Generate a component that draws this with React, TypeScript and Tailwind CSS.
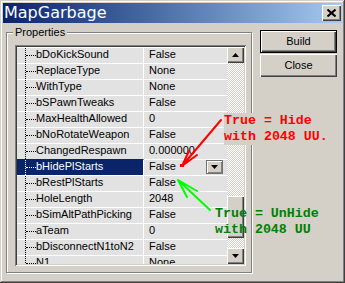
import React from 'react';

const rows: [string, string][] = [
  ['bDoKickSound', 'False'],
  ['ReplaceType', 'None'],
  ['WithType', 'None'],
  ['bSPawnTweaks', 'False'],
  ['MaxHealthAllowed', '0'],
  ['bNoRotateWeapon', 'False'],
  ['ChangedRespawn', '0.000000'],
  ['bHidePlStarts', 'False'],
  ['bRestPlStarts', 'False'],
  ['HoleLength', '2048'],
  ['bSimAltPathPicking', 'False'],
  ['aTeam', '0'],
  ['bDisconnectN1toN2', 'False'],
  ['N1', 'None'],
];

const SELECTED = 'bHidePlStarts';

function Triangle({ up }: { up?: boolean }) {
  return (
    <svg width="7" height="4" viewBox="0 0 7 4" className="block">
      {up ? <path d="M3.5 0 L7 4 L0 4 Z" fill="#000" /> : <path d="M0 0 L7 0 L3.5 4 Z" fill="#000" />}
    </svg>
  );
}

function ScrollButton({ up }: { up?: boolean }) {
  return (
    <div className="flex h-[16px] items-center justify-center bg-[#d4d0c8] shadow-[inset_1px_1px_#ffffff,inset_-1px_-1px_#404040,inset_-2px_-2px_#808080]">
      <Triangle up={up} />
    </div>
  );
}

function PropRow({ name, value }: { name: string; value: string }) {
  const sel = name === SELECTED;
  const dots = sel ? 'border-white' : 'border-black';
  return (
    <div className="flex h-[16px] shrink-0 bg-[#e2e2e2]">
      <div
        className={`flex w-[127px] shrink-0 border-t border-r border-r-white ${
          sel ? 'border-t-[#0a246a] bg-[#0a246a] text-white' : 'border-t-white text-black'
        }`}
      >
        <div className="w-[8px] shrink-0" />
        <div className={`w-px shrink-0 border-l border-dotted ${dots}`} />
        <div className="flex w-[10px] shrink-0 items-center">
          <div className={`w-full border-t border-dotted ${dots}`} />
        </div>
        <span className="whitespace-nowrap leading-[13px]">{name}</span>
      </div>
      <div className="flex flex-1 justify-between border-t border-white pl-[5px]">
        <span className="leading-[13px]">{value}</span>
        {sel && (
          <div className="mr-[4px] flex h-[14px] w-[17px] items-center justify-center border border-[#707070] bg-[#d4d0c8] shadow-[inset_1px_1px_#ffffff,inset_-1px_-1px_#808080]">
            <Triangle />
          </div>
        )}
      </div>
    </div>
  );
}

export default function App() {
  return (
    <div className="relative h-[283px] w-[345px] overflow-hidden bg-[#d4d0c8] p-[3px] font-['Liberation_Sans',Arial,sans-serif] text-[11px] text-black shadow-[inset_-1px_-1px_#404040,inset_1px_1px_#d4d0c8,inset_-2px_-2px_#808080,inset_2px_2px_#ffffff]">
      {/* title bar */}
      <div className="flex h-[20px] items-center justify-between bg-linear-to-r from-[#0a246a] to-[#a6caf0] pl-px pr-px">
        <span className="font-['DejaVu_Sans',sans-serif] text-[16px] leading-[20px] text-white">MapGarbage</span>
        <div className="flex h-[16px] w-[19px] items-center justify-center bg-[#d4d0c8] shadow-[inset_1px_1px_#ffffff,inset_-1px_-1px_#404040,inset_-2px_-2px_#808080]">
          <svg width="9" height="8" viewBox="0 0 9 8" className="block">
            <path d="M0.5 0.5 L8.5 7.5 M8.5 0.5 L0.5 7.5" stroke="#000" strokeWidth="2" />
          </svg>
        </div>
      </div>

      <div className="flex pl-[3px]">
        {/* group box */}
        <div className="mt-[9px] flex h-[241px] w-[246px] flex-col border border-[#808080] shadow-[inset_1px_1px_#ffffff,1px_1px_#ffffff]">
          <span className="-mt-[7px] ml-[6px] self-start bg-[#d4d0c8] px-[2px] leading-[13px]">Properties</span>
          <div className="ml-[8px] mt-[6px] h-[221px] w-[231px] p-[2px] shadow-[inset_1px_1px_#808080,inset_-1px_-1px_#ffffff,inset_2px_2px_#404040,inset_-2px_-2px_#d4d0c8]">
            <div className="flex h-[217px]">
              <div className="flex w-[210px] flex-col overflow-hidden bg-[#e2e2e2]">
                {rows.map(([n, v]) => (
                  <PropRow key={n} name={n} value={v} />
                ))}
              </div>
              <div className="flex w-[17px] flex-col">
                <ScrollButton up />
                <div className="flex flex-1 flex-col bg-[image:repeating-conic-gradient(#d4d0c8_0%_25%,#ffffff_0%_50%)] bg-[length:2px_2px]">
                  <div className="h-[133px]" />
                  <div className="h-[42px] bg-[#d4d0c8] shadow-[inset_1px_1px_#ffffff,inset_-1px_-1px_#404040,inset_-2px_-2px_#808080]" />
                </div>
                <ScrollButton />
              </div>
            </div>
          </div>
        </div>

        {/* buttons */}
        <div className="ml-[8px] mt-[7px] flex w-[77px] flex-col gap-px">
          <div className="h-[23px] border border-black">
            <div className="flex h-full items-center justify-center bg-[#d4d0c8] shadow-[inset_1px_1px_#ffffff,inset_-1px_-1px_#404040,inset_-2px_-2px_#808080]">
              Build
            </div>
          </div>
          <div className="flex h-[23px] items-center justify-center bg-[#d4d0c8] shadow-[inset_1px_1px_#ffffff,inset_-1px_-1px_#404040,inset_-2px_-2px_#808080]">
            Close
          </div>
        </div>
      </div>

      {/* annotations */}
      <div className="absolute left-[224px] top-[113px] whitespace-pre bg-[#d4d0c8] font-['Liberation_Mono',monospace] text-[13.3px] font-bold leading-[16px] text-[#ff0000]">
        {'True = Hide\nwith 2048 UU.'}
      </div>
      <div className="absolute left-[215px] top-[206px] whitespace-pre font-['Liberation_Mono',monospace] text-[13.3px] font-bold leading-[16px] text-[#008000]">
        {'True = UnHide\nwith 2048 UU'}
      </div>
      <svg className="pointer-events-none absolute left-0 top-0" width="345" height="283" viewBox="0 0 345 283">
        <g stroke="#ff0000" strokeWidth="2" strokeLinecap="round" fill="none">
          <path d="M221 120 L182 166 M182 166 L189 151 M182 166 L197 155" />
        </g>
        <rect x="180" y="164" width="4" height="3" fill="#ff0000" />
        <g stroke="#00ff00" strokeWidth="2" strokeLinecap="round" fill="none">
          <path d="M210 210 L178 180 M178 180 L197 191 M178 180 L187 197" />
        </g>
      </svg>
    </div>
  );
}
